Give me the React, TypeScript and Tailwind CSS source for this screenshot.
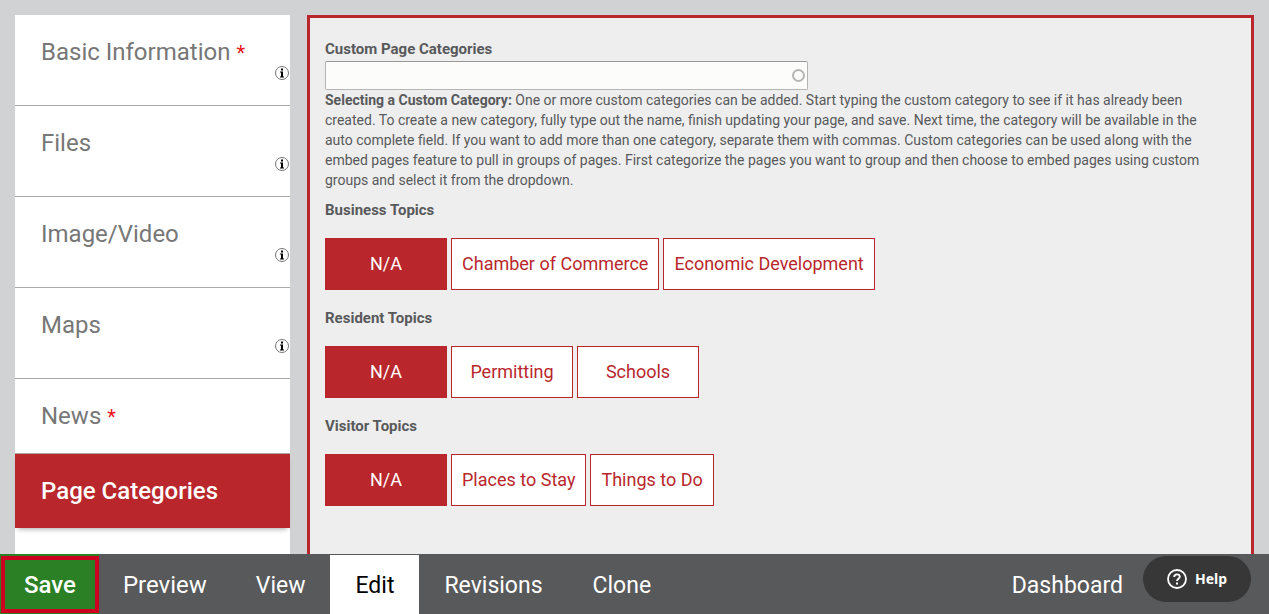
import React, { useState } from 'react';

interface Section {
  label: string;
  required?: boolean;
  info?: boolean;
}

const sections: Section[] = [
  { label: 'Basic Information', required: true, info: true },
  { label: 'Files', info: true },
  { label: 'Image/Video', info: true },
  { label: 'Maps', info: true },
  { label: 'News', required: true },
  { label: 'Page Categories' },
];

const topics = [
  { title: 'Business Topics', options: ['N/A', 'Chamber of Commerce', 'Economic Development'] },
  { title: 'Resident Topics', options: ['N/A', 'Permitting', 'Schools'] },
  { title: 'Visitor Topics', options: ['N/A', 'Places to Stay', 'Things to Do'] },
];

const InfoIcon = () => (
  <svg width="14" height="14" viewBox="0 0 14 14" aria-hidden="true">
    <circle cx="7" cy="7" r="6.5" fill="#fff" stroke="#666" strokeWidth="0.9" />
    <path d="M6 2.5h2v2H6zM5 5.500h3v5h1v1H5v-1h1v-4H5z" fill="#000" />
  </svg>
);

const HelpIcon = () => (
  <svg width="20" height="20" viewBox="0 0 20 20" fill="none" stroke="#fff" aria-hidden="true">
    <circle cx="10" cy="10" r="9" strokeWidth="1.8" />
    <path d="M7.200 8c0-1.700 1.200-2.700 2.800-2.700s2.800 1 2.800 2.500c0 1.900-2.800 2.100-2.800 4.200" strokeWidth="1.800" />
    <path d="M9 13.500h2v2H9z" fill="#fff" stroke="none" />
  </svg>
);

const Sidebar: React.FC = () => {
  const [active, setActive] = useState('Page Categories');

  return (
    <aside className="w-[275px] shrink-0 bg-white">
      {sections.map((section) => (
        <button
          key={section.label}
          type="button"
          onClick={() => setActive(section.label)}
          className={`block w-full pt-[23px] text-left text-2xl ${
            section.label === active
              ? 'bg-[#b9272c] font-medium text-white shadow-[0_4px_5px_-3px_rgba(0,0,0,0.35)]'
              : 'border-b border-[#aaa9a5] text-[#777]'
          } ${section.info ? 'pb-[19px]' : 'pb-[23px]'}`}
        >
          <span className="block pl-[26px] leading-7">
            {section.label}
            {section.required && <span className="pl-1.5 text-xl leading-none text-[#e8141c]">*</span>}
          </span>
          {section.info && (
            <span className="flex h-5 justify-end pr-px">
              <InfoIcon />
            </span>
          )}
        </button>
      ))}
    </aside>
  );
};

const TopicGroup: React.FC<{ title: string; options: string[] }> = ({ title, options }) => {
  const [value, setValue] = useState('N/A');

  return (
    <fieldset className="mb-[18px]">
      <legend className="mb-[18px] text-[15px] leading-5 font-bold">{title}</legend>
      <div className="flex flex-wrap gap-1">
        {options.map((option) => (
          <label
            key={option}
            className={`relative flex h-[52px] min-w-[122px] cursor-pointer items-center justify-center border border-[#b9272c] px-2.5 text-lg ${
              option === value ? 'bg-[#b9272c] text-white' : 'bg-white text-[#b9272c]'
            }`}
          >
            <input
              type="radio"
              name={title}
              checked={option === value}
              onChange={() => setValue(option)}
              className="sr-only"
            />
            {option}
          </label>
        ))}
      </div>
    </fieldset>
  );
};

const ActionBar: React.FC = () => (
  <nav className="flex h-[60px] shrink-0 bg-[#58595b] text-[23px] text-white">
    <div className="bg-[#2b7f25] p-px pt-0.5 pr-0">
      <button
        type="button"
        className="h-full border-4 border-[#ce0020] bg-[#2b7f25] px-[19px] text-2xl font-medium"
      >
        Save
      </button>
    </div>
    <button type="button" className="mt-px px-6 text-2xl">Preview</button>
    <a href="#view" className="mt-px flex items-center px-[25px] pt-[3px]">View</a>
    <a href="#edit" aria-current="page" className="mt-px flex items-center bg-white px-[25px] pt-[3px] text-black">Edit</a>
    <a href="#revisions" className="mt-px flex items-center px-[25px] pt-[3px]">Revisions</a>
    <a href="#clone" className="mt-px flex items-center px-[25px] pt-[3px]">Clone</a>
    <a href="#dashboard" className="mt-px ml-auto flex items-center px-5 pt-[3px]">Dashboard</a>
    <button
      type="button"
      className="mt-0.5 mr-[18px] flex h-[46px] w-[108px] items-center justify-center gap-2 rounded-full bg-[#373737] font-['Noto_Sans',sans-serif] text-sm font-bold"
    >
      <HelpIcon />
      Help
    </button>
  </nav>
);

export default function App() {
  const [category, setCategory] = useState('');

  return (
    <div className="flex h-screen flex-col bg-[#d1d2d4] font-[Roboto,sans-serif]">
      <div className="flex min-h-0 flex-1 gap-[17px] overflow-hidden px-[15px] pt-[15px]">
        <Sidebar />
        <main className="flex-1 border-[3px] border-b-0 border-[#b9272c] bg-[#eee] px-[15px] pt-[21px] text-[#58595b]">
          <label htmlFor="categories" className="mb-0.5 block text-[15px] leading-5 font-bold">
            Custom Page Categories
          </label>
          <div className="relative w-full max-w-[483px]">
            <input
              id="categories"
              type="text"
              value={category}
              onChange={(e) => setCategory(e.target.value)}
              className="block h-[29px] w-full rounded-xs border border-[#b5b5b5] border-t-[#999] bg-[#fcfcfa] pr-6 pl-2 text-sm"
            />
            {/* Autocomplete throbber */}
            <span className="pointer-events-none absolute top-2 right-[3px] size-[13px] rounded-full border-2 border-[#b5b5b5]" />
          </div>
          <p className="mb-2.5 max-w-[895px] text-sm leading-5">
            <strong className="font-bold">Selecting a Custom Category:</strong> One or more custom categories can be
            added. Start typing the custom category to see if it has already been created. To create a new category,
            fully type out the name, finish updating your page, and save. Next time, the category will be available in
            the auto complete field. If you want to add more than one category, separate them with commas. Custom
            categories can be used along with the embed pages feature to pull in groups of pages. First categorize the
            pages you want to group and then choose to embed pages using custom groups and select it from the dropdown.
          </p>
          {topics.map((topic) => (
            <TopicGroup key={topic.title} title={topic.title} options={topic.options} />
          ))}
        </main>
      </div>
      <ActionBar />
    </div>
  );
}
